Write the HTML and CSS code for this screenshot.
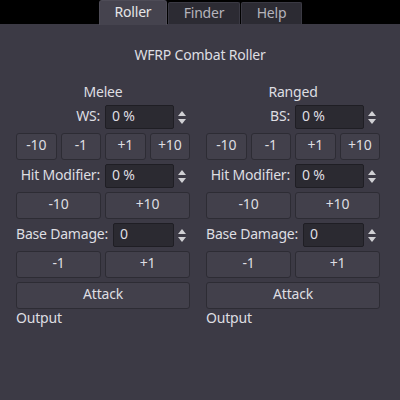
FILE: index.html
```html
<!DOCTYPE html>
<html>
<head>
<meta charset="utf-8">
<link rel="stylesheet" href="styles.css">
</head>
<body>
<div class="tabbar">
  <div class="tab active">Roller</div>
  <div class="tab">Finder</div>
  <div class="tab">Help</div>
</div>
<div class="panel">
  <div class="title">WFRP Combat Roller</div>
  <div class="columns">
    <div class="col">
      <div class="heading">Melee</div>
      <div class="spinrow">
        <span class="lbl">WS:</span>
        <div class="spin"><div class="box">0 %</div><div class="arrows"><i class="up"></i><i class="down"></i></div></div>
      </div>
      <div class="btnrow four"><div class="btn">-10</div><div class="btn">-1</div><div class="btn">+1</div><div class="btn">+10</div></div>
      <div class="spinrow">
        <span class="lbl">Hit Modifier:</span>
        <div class="spin"><div class="box">0 %</div><div class="arrows"><i class="up"></i><i class="down"></i></div></div>
      </div>
      <div class="btnrow two"><div class="btn">-10</div><div class="btn">+10</div></div>
      <div class="spinrow">
        <span class="lbl">Base Damage:</span>
        <div class="spin"><div class="box">0</div><div class="arrows"><i class="up"></i><i class="down"></i></div></div>
      </div>
      <div class="btnrow two"><div class="btn">-1</div><div class="btn">+1</div></div>
      <div class="btnrow"><div class="btn">Attack</div></div>
      <div class="output">Output</div>
    </div>
    <div class="col">
      <div class="heading">Ranged</div>
      <div class="spinrow">
        <span class="lbl">BS:</span>
        <div class="spin"><div class="box">0 %</div><div class="arrows"><i class="up"></i><i class="down"></i></div></div>
      </div>
      <div class="btnrow four"><div class="btn">-10</div><div class="btn">-1</div><div class="btn">+1</div><div class="btn">+10</div></div>
      <div class="spinrow">
        <span class="lbl">Hit Modifier:</span>
        <div class="spin"><div class="box">0 %</div><div class="arrows"><i class="up"></i><i class="down"></i></div></div>
      </div>
      <div class="btnrow two"><div class="btn">-10</div><div class="btn">+10</div></div>
      <div class="spinrow">
        <span class="lbl">Base Damage:</span>
        <div class="spin"><div class="box">0</div><div class="arrows"><i class="up"></i><i class="down"></i></div></div>
      </div>
      <div class="btnrow two"><div class="btn">-1</div><div class="btn">+1</div></div>
      <div class="btnrow"><div class="btn">Attack</div></div>
      <div class="output">Output</div>
    </div>
  </div>
</div>
</body>
</html>
```
FILE: styles.css
```css
html, body {
  margin: 0;
  padding: 0;
  background: #000;
  width: 400px;
  height: 400px;
  overflow: hidden;
  font-family: "Noto Sans", "DejaVu Sans", sans-serif;
  font-size: 14px;
  letter-spacing: -0.2px;
  color: #dedee2;
}
.tabbar {
  height: 24px;
  display: flex;
  justify-content: center;
  align-items: flex-end;
  padding-left: 1px;
  gap: 1px;
}
.tab {
  box-sizing: border-box;
  height: 22px;
  line-height: 20px;
  text-align: center;
  background: #2c2b33;
  border: 1px solid #3a3943;
  border-bottom: none;
  border-radius: 2px 2px 0 0;
  color: #b4b3bb;
}
.tab:nth-child(1) { width: 68px; }
.tab:nth-child(2) { width: 72px; }
.tab:nth-child(3) { width: 61px; }
.tab.active {
  height: 25px;
  margin-bottom: -1px;
  line-height: 22px;
  background: #45434e;
  border-color: #4e4c57;
  color: #e6e6e8;
  border-radius: 3px 3px 0 0;
}
.panel {
  height: 376px;
  background: #3c3a45;
  padding-top: 22px;
  box-sizing: border-box;
}
.title {
  height: 18px;
  line-height: 18px;
  text-align: center;
}
.columns {
  display: flex;
  gap: 16px;
  padding: 20px 20px 0 16px;
}
.col {
  width: 174px;
  display: flex;
  flex-direction: column;
  gap: 4px;
}
.heading {
  height: 17px;
  line-height: 16px;
  text-align: center;
}
.spinrow {
  height: 24px;
  display: flex;
  align-items: flex-start;
  gap: 5px;
}
.lbl {
  flex: 1 1 auto;
  text-align: right;
  white-space: nowrap;
  line-height: 21px;
}
.spin {
  flex: 0 1 85px;
  min-width: 0;
  display: flex;
  height: 24px;
}
.box {
  flex: 1;
  box-sizing: border-box;
  height: 24px;
  line-height: 20px;
  padding-left: 6px;
  background: #2b2a31;
  border: 1px solid #1f1e24;
  border-radius: 2px;
}
.arrows {
  width: 16px;
  display: flex;
  flex-direction: column;
  align-items: center;
  justify-content: center;
  gap: 3px;
}
.arrows i {
  display: block;
  width: 0;
  height: 0;
  border-left: 4.5px solid transparent;
  border-right: 4.5px solid transparent;
}
.arrows .up { border-bottom: 5px solid #d0d0d4; }
.arrows .down { border-top: 5px solid #d0d0d4; }
.btnrow {
  display: flex;
  gap: 4px;
  height: 27px;
}
.btn {
  flex: 1;
  box-sizing: border-box;
  height: 27px;
  line-height: 22px;
  text-align: center;
  background: #42404b;
  border: 1px solid #2d2c34;
  border-radius: 3px;
}
.output {
  margin-top: -4px;
  height: 18px;
  line-height: 17px;
}
```
